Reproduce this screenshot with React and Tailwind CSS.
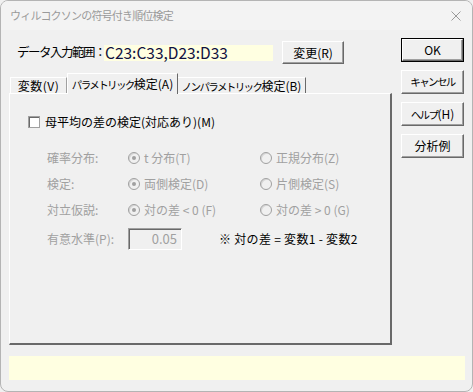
import React from "react";

const FONT = "font-['Noto_Sans_CJK_JP','Noto_Sans',sans-serif] whitespace-nowrap";

// katakana in the original UI font are narrow; squeeze them a little
const Kana = ({ children }) => (
  <span className="text-[10.5px] tracking-[-1.6px]">{children}</span>
);

const Button = ({ children, primary, className = "" }) => (
  <div
    className={`flex items-center justify-center bg-[#f0f0f0] text-black ${
      primary ? "border border-black" : ""
    } ${className}`}
  >
    <div className="w-full h-full flex items-center justify-center border border-t-white border-l-white border-r-[#696969] border-b-[#696969] shadow-[inset_-1px_-1px_0_#a0a0a0]">
      {children}
    </div>
  </div>
);

const Radio = ({ checked }) => (
  <span className="w-[12px] h-[12px] rounded-full border border-[#a0a0a0] bg-[#f0f0f0] shadow-[inset_1px_1px_0_#d6d6d6] flex items-center justify-center shrink-0">
    {checked && <span className="w-[4px] h-[4px] rounded-full bg-[#a0a0a0]" />}
  </span>
);

const RadioOption = ({ checked, label }) => (
  <div className="flex items-center gap-[4px] text-[#a0a0a0]">
    <Radio checked={checked} />
    <span>{label}</span>
  </div>
);

const rows = [
  { label: "確率分布:", a: "t 分布(T)", b: "正規分布(Z)" },
  { label: "検定:", a: "両側検定(D)", b: "片側検定(S)" },
  { label: "対立仮説:", a: "対の差 < 0 (F)", b: "対の差 > 0 (G)" },
];

export default function App() {
  return (
    <div className={`w-[473px] h-[392px] bg-[#f0f0f0] ${FONT}`}>
      <div className="w-full h-full flex flex-col border border-[#b4b4b4] rounded-[8px] overflow-hidden">
        {/* title bar */}
        <div className="h-[29px] shrink-0 flex items-center justify-between pl-[9px] pr-[10px] bg-[#f3f3f3]">
          <span className="text-[11px] tracking-[-0.8px] text-[#9a9a9a]">ウィルコクソンの符号付き順位検定</span>
          <svg width="10" height="10" viewBox="0 0 10 10" className="mr-[1px]">
            <path d="M0.5 0.5L9.5 9.5M9.5 0.5L0.5 9.5" stroke="#9a9a9a" strokeWidth="1" />
          </svg>
        </div>

        <div className="flex-1 flex flex-col px-[8px]">
          <div className="flex">
            {/* left column */}
            <div className="w-[383px] flex flex-col">
              <div className="mt-[11px] h-[23px] flex items-center">
                <span className="w-[95px] shrink-0 pl-[8px] text-[12.5px] text-black">
                  <span className="tracking-[-1.5px]">データ入力範囲</span>
                  <span>：</span>
                </span>
                <div className="w-[169px] h-[16px] bg-[#ffffe1] flex items-center pl-[1px] text-[15.5px] text-[#101040] leading-none">
                  C23:C33,D23:D33
                </div>
                <Button className="ml-[9px] w-[62px] h-[23px] text-[12px]">変更(R)</Button>
              </div>

              {/* tabs */}
              <div className="mt-[9px] h-[20px] flex items-end pl-[1px] text-[12px] text-black">
                <div className="w-[57px] h-[16px] flex items-center justify-center tracking-[0.5px] border-t border-l border-white border-r border-r-[#a0a0a0] shadow-[1px_0_0_#696969]">
                  変数(V)
                </div>
                <div className="w-[111px] h-[21px] -mb-[1px] relative z-10 bg-[#f0f0f0] flex items-center justify-center border-t border-l border-white border-r border-r-[#696969]">
                  <span>
                    <Kana>パラメトリック</Kana>検定(A)
                  </span>
                </div>
                <div className="w-[128px] h-[16px] flex items-center justify-center border-t border-white border-r border-r-[#696969]">
                  <span>
                    <Kana>ノンパラメトリック</Kana>検定(B)
                  </span>
                </div>
              </div>

              {/* panel */}
              <div className="h-[252px] flex flex-col border-t border-l border-white border-r-[2px] border-b-[2px] border-r-[#696969] border-b-[#696969] text-[12px]">
                <div className="mt-[19px] ml-[18px] flex items-center gap-[5px] text-black">
                  <span className="w-[12px] h-[12px] bg-white border border-[#a0a0a0] shadow-[inset_1px_1px_0_#696969]" />
                  <span>母平均の差の検定(対応あり)(M)</span>
                </div>

                <div className="mt-[14px] ml-[37px] grid grid-cols-[81px_132px_auto] auto-rows-[26px] items-center">
                  {rows.map((r) => (
                    <React.Fragment key={r.label}>
                      <span className="text-[#a0a0a0]">{r.label}</span>
                      <RadioOption checked label={r.a} />
                      <RadioOption label={r.b} />
                    </React.Fragment>
                  ))}
                </div>

                <div className="mt-[5px] ml-[37px] flex items-center">
                  <span className="w-[81px] text-[#a0a0a0]">有意水準(P):</span>
                  <div className="w-[54px] h-[22px] flex items-center justify-end pr-[4px] border border-t-[#a0a0a0] border-l-[#a0a0a0] border-r-white border-b-white shadow-[inset_1px_1px_0_#696969] text-[13px] text-[#a0a0a0]">
                    0.05
                  </div>
                  <span className="ml-[37px] tracking-[0.3px] text-black">※ 対の差 = 変数1 - 変数2</span>
                </div>
              </div>
            </div>

            {/* right column */}
            <div className="ml-[9px] mt-[8px] flex flex-col gap-[8px] text-[12px]">
              <Button primary className="w-[63px] h-[24px]">OK</Button>
              <Button className="w-[63px] h-[24px]">
                <Kana>キャンセル</Kana>
              </Button>
              <Button className="w-[63px] h-[24px]">
                <span>
                  <Kana>ヘルプ</Kana>(H)
                </span>
              </Button>
              <Button className="w-[63px] h-[24px]">分析例</Button>
            </div>
          </div>

          <div className="mt-[11px] h-[24px] w-[456px] bg-[#ffffe1]" />
        </div>
      </div>
    </div>
  );
}
